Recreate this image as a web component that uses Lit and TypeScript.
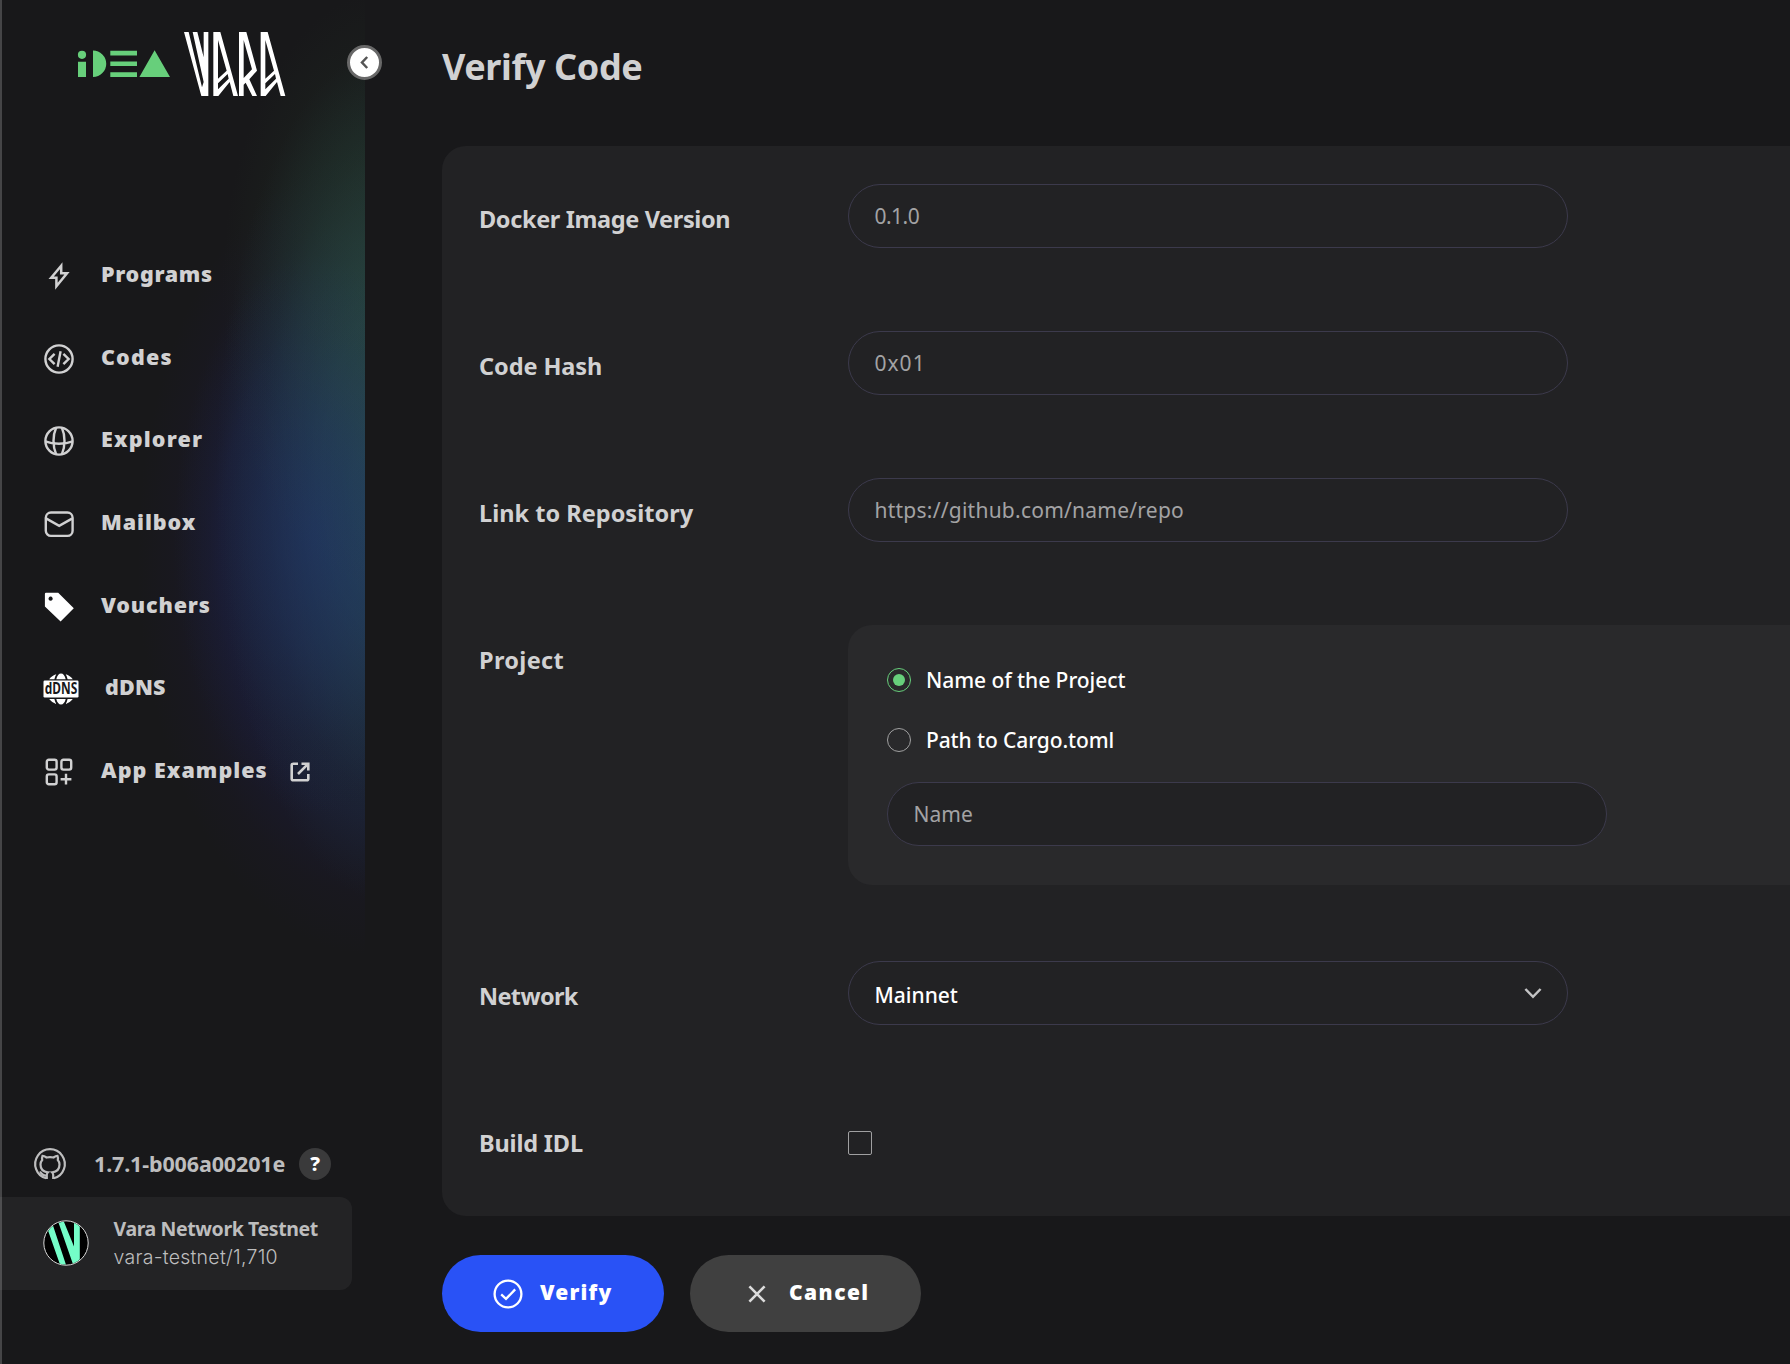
import { LitElement, html, css, svg } from "lit";
import { customElement, state } from "lit/decorators.js";

const boltIcon = svg`<svg width="22" height="30" viewBox="0 0 22 30" fill="none" stroke="currentColor" stroke-width="2.5"><path d="M13.2 4.800 3.200 16.700H8.400V25.200L19 12.200H13.200Z" stroke-miterlimit="10"/></svg>`;
const codeIcon = svg`<svg width="30" height="30" viewBox="0 0 30 30" fill="none" stroke="currentColor" stroke-width="2.4"><circle cx="15" cy="15" r="13.600"/><path d="M10.600 9.800 5.400 15l5.200 5.200M19.400 9.800l5.200 5.200-5.200 5.200M16.600 7.300 13.600 22.700"/></svg>`;
const globeIcon = svg`<svg width="30" height="30" viewBox="0 0 30 30" fill="none" stroke="currentColor" stroke-width="2.4"><circle cx="15" cy="15" r="13.600"/><path d="M12.200 1.600C8.600 9.600 8.600 20.400 12.200 28.400M17.800 1.600c3.600 8 3.600 18.800 0 26.800M1.200 15.400c8 3.200 19.600 3.200 27.600 0"/></svg>`;
const mailIcon = svg`<svg width="30" height="28" viewBox="0 0 30 28" fill="none" stroke="currentColor" stroke-width="2.4"><rect x="1.800" y="2.500" width="26.800" height="23.400" rx="5.200"/><path d="M2.400 8.600 15.200 15.800 28 8.600"/></svg>`;
const tagIcon = svg`<svg width="30" height="30" viewBox="0 0 30 30"><path fill="#fff" fill-rule="evenodd" d="M2 .8H14.200L29.800 16.200 16.600 29.600.9 14.400V2Q.9.8 2 .8ZM6.600 4.600a2.100 2.100 0 1 0 .01 0Z"/></svg>`;
const dnsIcon = svg`<svg class="dns" width="36" height="32" viewBox="0 0 36 32"><g fill="#fff"><path d="M13.300 6.200C14.200 2.600 15.800.6 18 .6s3.800 2 4.700 5.600ZM11.400 6.200H6.200C7.900 3.900 10.400 2.200 13.300 1.300 12.500 2.600 11.800 4.300 11.400 6.200ZM24.600 6.200H29.800C28.100 3.900 25.600 2.200 22.700 1.300 23.500 2.600 24.200 4.300 24.600 6.200Z"/><rect x=".5" y="7.600" width="35" height="16.800" rx="1.200"/><path d="M13.300 26C14.200 29.600 15.800 31.500 18 31.500s3.800-1.900 4.700-5.500ZM11.400 26H6.200c1.700 2.300 4.200 4 7.100 4.900-.8-1.300-1.500-3-1.900-4.900ZM24.600 26h5.200c-1.700 2.300-4.200 4-7.100 4.900.8-1.300 1.500-3 1.900-4.900Z"/></g><text x="18" y="21.400" text-anchor="middle" textLength="32.500" lengthAdjust="spacingAndGlyphs">dDNS</text></svg>`;
const appsIcon = svg`<svg width="28" height="28" viewBox="0 0 28 28" fill="none" stroke="currentColor" stroke-width="2.4"><rect x="1.800" y="1.800" width="9.800" height="9.800" rx="2"/><rect x="16.400" y="1.800" width="9.800" height="9.800" rx="2"/><rect x="1.800" y="16.400" width="9.800" height="9.800" rx="2"/><path d="M21 15.800v10.800M15.600 21.200h10.800"/></svg>`;
const externalIcon = svg`<svg width="20" height="20" viewBox="0 0 20 20" fill="none" stroke="#d1d1d2" stroke-width="2.600"><path d="M8 1.700H3.200Q1.700 1.700 1.700 3.200V16.800Q1.700 18.300 3.200 18.300H16.800Q18.300 18.300 18.300 16.800V12M8 12 17.600 2.400M11.500 1.700H18.300V8.500"/></svg>`;
const githubIcon = svg`<svg width="32" height="32" viewBox="0 0 32 32" fill="none" stroke="currentColor" stroke-width="2.200"><path d="M12.200 30.300A14.800 14.800 0 1 1 19.800 30.300"/><path d="M12.800 31v-4c0-1 .3-2 1-2.600C8.500 23.800 6.500 21 6.500 16.500c0-2 .6-3.400 1.700-4.600-.3-1.300-.2-2.800.3-4 1.600 0 3 .9 4 1.600 2-.5 5-.5 7 0 1-.7 2.400-1.600 4-1.600.5 1.200.6 2.700.3 4 1.100 1.200 1.700 2.600 1.700 4.600 0 4.500-2 7.300-7.300 7.900.7.600 1 1.600 1 2.600v4M12.800 27.400c-5 1-4.600-2.800-7.200-3.200"/></svg>`;
const avatarIcon = svg`<svg width="46" height="46" viewBox="0 0 46 46"><defs><clipPath id="disc"><circle cx="23" cy="23" r="21.600"/></clipPath></defs><circle cx="23" cy="23" r="22.200" fill="#000" stroke="#d8d8d8" stroke-width="1"/><g clip-path="url(#disc)" fill="#74fdc8"><path d="M4.500 9 10 5.500 23.400 46H17.500ZM14.600 0H20.200L31 26.500V0H36.800V46H30.600Z"/></g></svg>`;
const verifyIcon = svg`<svg width="30" height="30" viewBox="0 0 30 30" fill="none" stroke="#fff" stroke-width="2.300"><circle cx="15" cy="15" r="13.400"/><path d="M8.200 15.400 13 19.900 22.200 10.400"/></svg>`;
const crossIcon = svg`<svg width="18" height="18" viewBox="0 0 18 18" fill="none" stroke="#dcdcdc" stroke-width="2.600"><path d="M1.400 1.400 16.600 16.600M16.600 1.400 1.400 16.600"/></svg>`;
const chevronIcon = svg`<svg width="18" height="12" viewBox="0 0 18 12" fill="none" stroke="#c4c4c5" stroke-width="2.500"><path d="M1.400 2 9 9.800 16.600 2"/></svg>`;
const ideaLogo = svg`<svg width="94" height="30" viewBox="77 49 94 30" fill="#67cf7b"><circle cx="82" cy="54.800" r="4.100"/><path d="M78 61.700h8V77h-8ZM93 50.500A13.200 13.200 0 0 1 93 77ZM110.300 50.800H137v4.600h-26.700ZM110.300 61.500H137v4.600h-26.700ZM110.300 72.300H137V77h-26.700ZM154.600 50.300 170 77H139.400Z"/></svg>`;
const varaLogo = svg`<svg width="102" height="66" viewBox="554 93 306 198" fill="#fff"><path d="M554 96H568L608 262 613 246 580 96H594L613 172V96H627V288H606Z"/><path fill-rule="evenodd" d="M642 96H663L716 288H702L691 246 657 288H642ZM656 120V236L682 212ZM656 250V268L688 236 685 222Z"/><path fill-rule="evenodd" d="M719 96H741L773 212 750 238 773 288H759L739 248 733 254V288H719ZM733 120V234L758 208Z"/><path fill-rule="evenodd" transform="translate(142)" d="M642 96H663L716 288H702L691 246 657 288H642ZM656 120V236L682 212ZM656 250V268L688 236 685 222Z"/></svg>`;

const NAV = [
  { label: "Programs", icon: boltIcon, track: 0.96 },
  { label: "Codes", icon: codeIcon, track: 1.46 },
  { label: "Explorer", icon: globeIcon, track: 1.47 },
  { label: "Mailbox", icon: mailIcon, track: 1.21 },
  { label: "Vouchers", icon: tagIcon, track: 1.13 },
  { label: "dDNS", icon: dnsIcon, track: 0.45, wide: true },
  { label: "App Examples", icon: appsIcon, track: 1.34, external: true },
];

@customElement("app-sidebar")
class AppSidebar extends LitElement {
  static styles = css`
    :host { display: flex; flex-direction: column; position: relative; width: 365px; height: 1364px; box-sizing: border-box; border-left: 2px solid #454547; color: #d1d1d2; font-family: "Noto Sans", sans-serif; flex: none; }
    svg { display: block; flex: none; overflow: visible; }
    .glow { position: absolute; left: 0; right: 0; top: 0; height: 1000px; pointer-events: none; background:
      radial-gradient(ellipse 140px 280px at 312px 535px, rgba(32, 52, 112, .5), rgba(32, 52, 108, .34) 40%, rgba(32, 50, 100, .1) 75%, transparent),
      radial-gradient(ellipse 165px 300px at 385px 290px, rgba(44, 76, 48, .45), rgba(44, 76, 48, .28) 45%, rgba(44, 76, 48, .1) 75%, transparent),
      radial-gradient(ellipse 178px 430px at 392px 475px, rgba(44, 94, 104, .72), rgba(42, 88, 100, .52) 40%, rgba(36, 68, 80, .24) 75%, transparent),
      radial-gradient(ellipse 235px 400px at 370px 555px, rgba(26, 26, 54, .7), rgba(26, 26, 54, .65) 65%, rgba(26, 24, 40, .35) 85%, transparent); }
    .brand { position: relative; display: flex; align-items: center; height: 66px; padding: 31px 0 0 75px; gap: 13px; }
    .toggle { position: absolute; right: -17px; top: 45px; width: 35px; height: 35px; box-sizing: border-box; border: 3px solid #686868; border-radius: 50%; background: #fff; padding: 0; display: grid; place-items: center; }
    nav { position: relative; display: flex; flex-direction: column; margin-top: 136.500px; }
    .item { display: flex; align-items: center; height: 82.700px; font-size: 21.500px; font-weight: 900; white-space: nowrap; }
    .icon { width: 30px; margin: 2px 0 0 42px; display: flex; justify-content: center; }
    .dns { margin-right: -4px; }
    .dns text { font: 700 16.500px "Noto Sans", sans-serif; fill: #18181a; }
    .label { margin: -3px 0 0 27px; }
    .wide .label { margin-left: 31px; }
    .ext { margin: 3px 0 0 22.500px; }
    footer { margin-top: auto; padding-bottom: 74px; color: #bdbdbe; }
    .version { display: flex; align-items: center; height: 32px; padding-left: 32px; margin-bottom: 17px; font-size: 21.500px; font-weight: 700; }
    .version span { margin-left: 28px; letter-spacing: -.14px; line-height: 30px; }
    .help { width: 32px; height: 32px; border: 0; border-radius: 50%; background: #3a3a3b; color: #fff; font: 800 20px/32px "Noto Sans", sans-serif; padding: 0; margin-left: 14px; }
    .node { display: flex; align-items: center; height: 93px; width: 352px; margin-left: -2px; box-sizing: border-box; padding: 0 0 2px 42.500px; background: rgba(255, 255, 255, .05); border-radius: 0 12px 12px 0; }
    .names { margin-left: 25px; }
    .title { font-size: 19.500px; font-weight: 700; letter-spacing: -.4px; line-height: 28px; }
    .sub { font: 300 19.500px/28px Inter, sans-serif; letter-spacing: .26px; }
  `;
  render() {
    return html`
      <div class="glow"></div>
      <div class="brand">${ideaLogo}${varaLogo}</div>
      <button class="toggle" aria-label="Collapse"><svg width="9" height="13" viewBox="0 0 9 13" fill="none" stroke="#555" stroke-width="2.500"><path d="M7.200 1 2 6.500 7.200 12"/></svg></button>
      <nav>${NAV.map(n => html`
        <div class="item ${n.wide ? "wide" : ""}">
          <div class="icon">${n.icon}</div>
          <div class="label" style="letter-spacing:${n.track - 0.3}px">${n.label}</div>
          ${n.external ? html`<div class="ext">${externalIcon}</div>` : ""}
        </div>`)}
      </nav>
      <footer>
        <div class="version">${githubIcon}<span>1.7.1-b006a00201e</span><button class="help">?</button></div>
        <div class="node">${avatarIcon}<div class="names"><div class="title">Vara Network Testnet</div><div class="sub">vara-testnet/1,710</div></div></div>
      </footer>`;
  }
}

@customElement("app-root")
class AppRoot extends LitElement {
  @state() mode = 0;
  static styles = css`
    :host { display: flex; width: 100%; height: 1364px; overflow: hidden; background: #18181a; color: #d1d1d2; font-family: "Noto Sans", sans-serif; }
    svg { display: block; flex: none; }
    main { flex: 1; min-width: 0; padding-left: 77px; }
    h1 { margin: 42px 0 54px; font-size: 36px; line-height: 50px; font-weight: 700; letter-spacing: -.4px; }
    .card { box-sizing: border-box; height: 1070px; padding: 38px 0 0 38px; background: #222224; border-radius: 24px 0 0 24px; display: flex; flex-direction: column; gap: 83px; }
    .row { display: grid; grid-template-columns: 368px 1fr; min-height: 64px; }
    .row.project { margin-bottom: -7px; }
    .name { font-size: 23.500px; font-weight: 700; line-height: 30px; padding-top: 19.500px; margin-left: -1px; white-space: nowrap; }
    .field { box-sizing: border-box; width: 720px; height: 64px; border: 1px solid #3c3a4c; border-radius: 32px; background: #222224; padding: 0 25px 0 25.500px; display: flex; align-items: center; font-size: 21px; color: #a3a3a4; }
    .select { color: #fff; font-weight: 500; justify-content: space-between; }
    .select span { padding-top: 4px; }
    .panel { box-sizing: border-box; height: 260px; padding: 43px 0 0 39px; background: #29292b; border-radius: 24px 0 0 24px; }
    .radio { display: flex; align-items: center; height: 24px; margin-bottom: 36px; gap: 15px; color: #fff; font-size: 21px; font-weight: 500; white-space: nowrap; }
    .radio + .radio { margin-bottom: 30px; }
    .dot { box-sizing: border-box; width: 24px; height: 24px; border: 1.500px solid #a0a0a1; border-radius: 50%; display: grid; place-items: center; }
    .on { border-color: #67cf7b; }
    .on::after { content: ""; width: 12px; height: 12px; border-radius: 50%; background: #67cf7b; }
    .check { box-sizing: border-box; width: 24px; height: 24px; border: 1px solid #a0a0a1; border-radius: 2px; margin-top: 23px; }
    .actions { display: flex; gap: 26px; padding-top: 39px; }
    button { display: flex; align-items: center; box-sizing: border-box; height: 77px; border: 0; border-radius: 38.500px; color: #fff; font: 900 21px "Noto Sans", sans-serif; padding: 0; }
    button span { padding-bottom: 3px; }
    .verify { width: 222px; padding-left: 51px; gap: 17px; background: #2952f6; letter-spacing: 1.200px; }
    .cancel { width: 231px; padding-left: 58px; gap: 23px; background: #404040; letter-spacing: 1.450px; }
  `;
  row(label: string, track: number, body: unknown, cls = "") {
    return html`<div class="row ${cls}"><div class="name" style="letter-spacing:${track - 0.36}px">${label}</div>${body}</div>`;
  }
  field(text: string, track: number) {
    return html`<div class="field"><span style="letter-spacing:${track}px">${text}</span></div>`;
  }
  render() {
    const radios = [{ t: "Name of the Project", s: -0.05 }, { t: "Path to Cargo.toml", s: -0.1 }];
    return html`
      <app-sidebar></app-sidebar>
      <main>
        <h1>Verify Code</h1>
        <section class="card">
          ${this.row("Docker Image Version", 0, this.field("0.1.0", -0.52))}
          ${this.row("Code Hash", 0.29, this.field("0x01", 1))}
          ${this.row("Link to Repository", 0.38, this.field("https://github.com/name/repo", 0.24))}
          ${this.row("Project", 0.7, html`<div class="panel">
            ${radios.map((r, i) => html`<div class="radio" @click=${() => (this.mode = i)}><i class="dot ${this.mode === i ? "on" : ""}"></i><span style="letter-spacing:${r.s}px">${r.t}</span></div>`)}
            ${this.field("Name", 0)}
          </div>`, "project")}
          ${this.row("Network", -0.27, html`<div class="field select"><span>Mainnet</span>${chevronIcon}</div>`)}
          ${this.row("Build IDL", 0.19, html`<div class="check"></div>`)}
        </section>
        <div class="actions">
          <button class="verify">${verifyIcon}<span>Verify</span></button>
          <button class="cancel">${crossIcon}<span>Cancel</span></button>
        </div>
      </main>`;
  }
}
